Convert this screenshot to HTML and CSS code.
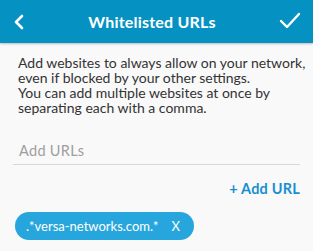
FILE: index.html
```html
<!DOCTYPE html>
<html>
<head>
<meta charset="utf-8">
<link rel="stylesheet" href="styles.css">
</head>
<body>
<header class="bar">
  <svg class="back" width="12" height="16" viewBox="0 0 12 16"><path d="M9 2 L3 8 L9 14" fill="none" stroke="#fff" stroke-width="2.6" stroke-linecap="round" stroke-linejoin="round"/></svg>
  <h1 class="title">Whitelisted URLs</h1>
  <svg class="check" width="22" height="18" viewBox="0 0 22 18"><path d="M2 9 L8 15 L20 2" fill="none" stroke="#fff" stroke-width="2.4" stroke-linecap="round" stroke-linejoin="round"/></svg>
</header>
<main class="content">
  <p class="desc">Add websites to always allow on your network,<br>even if blocked by your other settings.<br>You can add multiple websites at once by<br>separating each with a comma.</p>
  <div class="field"><span class="placeholder">Add URLs</span></div>
  <div class="actions"><span class="add">+ Add URL</span></div>
  <div class="chips"><span class="chip"><span class="chip-text">.*versa-networks.com.*</span><span class="chip-x">X</span></span></div>
</main>
</body>
</html>
```
FILE: styles.css
```css
* { box-sizing: border-box; }
html, body { margin: 0; padding: 0; }
body {
  width: 313px;
  height: 251px;
  overflow: hidden;
  background: #f9f9f9;
  font-family: Lato, "Liberation Sans", sans-serif;
}
.bar {
  height: 43px;
  background: #0592c2;
  display: flex;
  align-items: center;
  justify-content: space-between;
  padding: 0 12px 0 13px;
  box-shadow: 0 1px 2px rgba(0,0,0,0.25);
  position: relative;
}
.title {
  margin: 0 0 1px 0;
  color: #fff;
  font-size: 16px;
  font-weight: 700;
  letter-spacing: 0.2px;
}
.back { display: block; margin-top: 1px; }
.check { display: block; margin-top: -1px; }
.content { padding: 12px 13px 0 13px; }
.desc {
  margin: 0 0 0 5px;
  font-size: 14px;
  line-height: 15px;
  color: #333;
  white-space: nowrap;
}
.field {
  margin-top: 22px;
  border-bottom: 1px solid #d8d8d8;
  height: 28px;
  display: flex;
  align-items: center;
  padding-left: 6px;
}
.placeholder { color: #9e9e9e; font-size: 14.5px; letter-spacing: 0.3px; }
.actions { display: flex; justify-content: flex-end; margin-top: 15px; }
.add { color: #1a8fd0; font-weight: 700; font-size: 14.5px; letter-spacing: 0.2px; }
.chips { margin-top: 15px; display: flex; }
.chip {
  margin-left: 2px;
  height: 28px;
  border-radius: 14px;
  background: #27a6dd;
  color: #fff;
  display: flex;
  align-items: center;
  padding: 0 14px 0 11px;
  font-size: 13px;
}
.chip-x { margin-left: 13px; }
```
